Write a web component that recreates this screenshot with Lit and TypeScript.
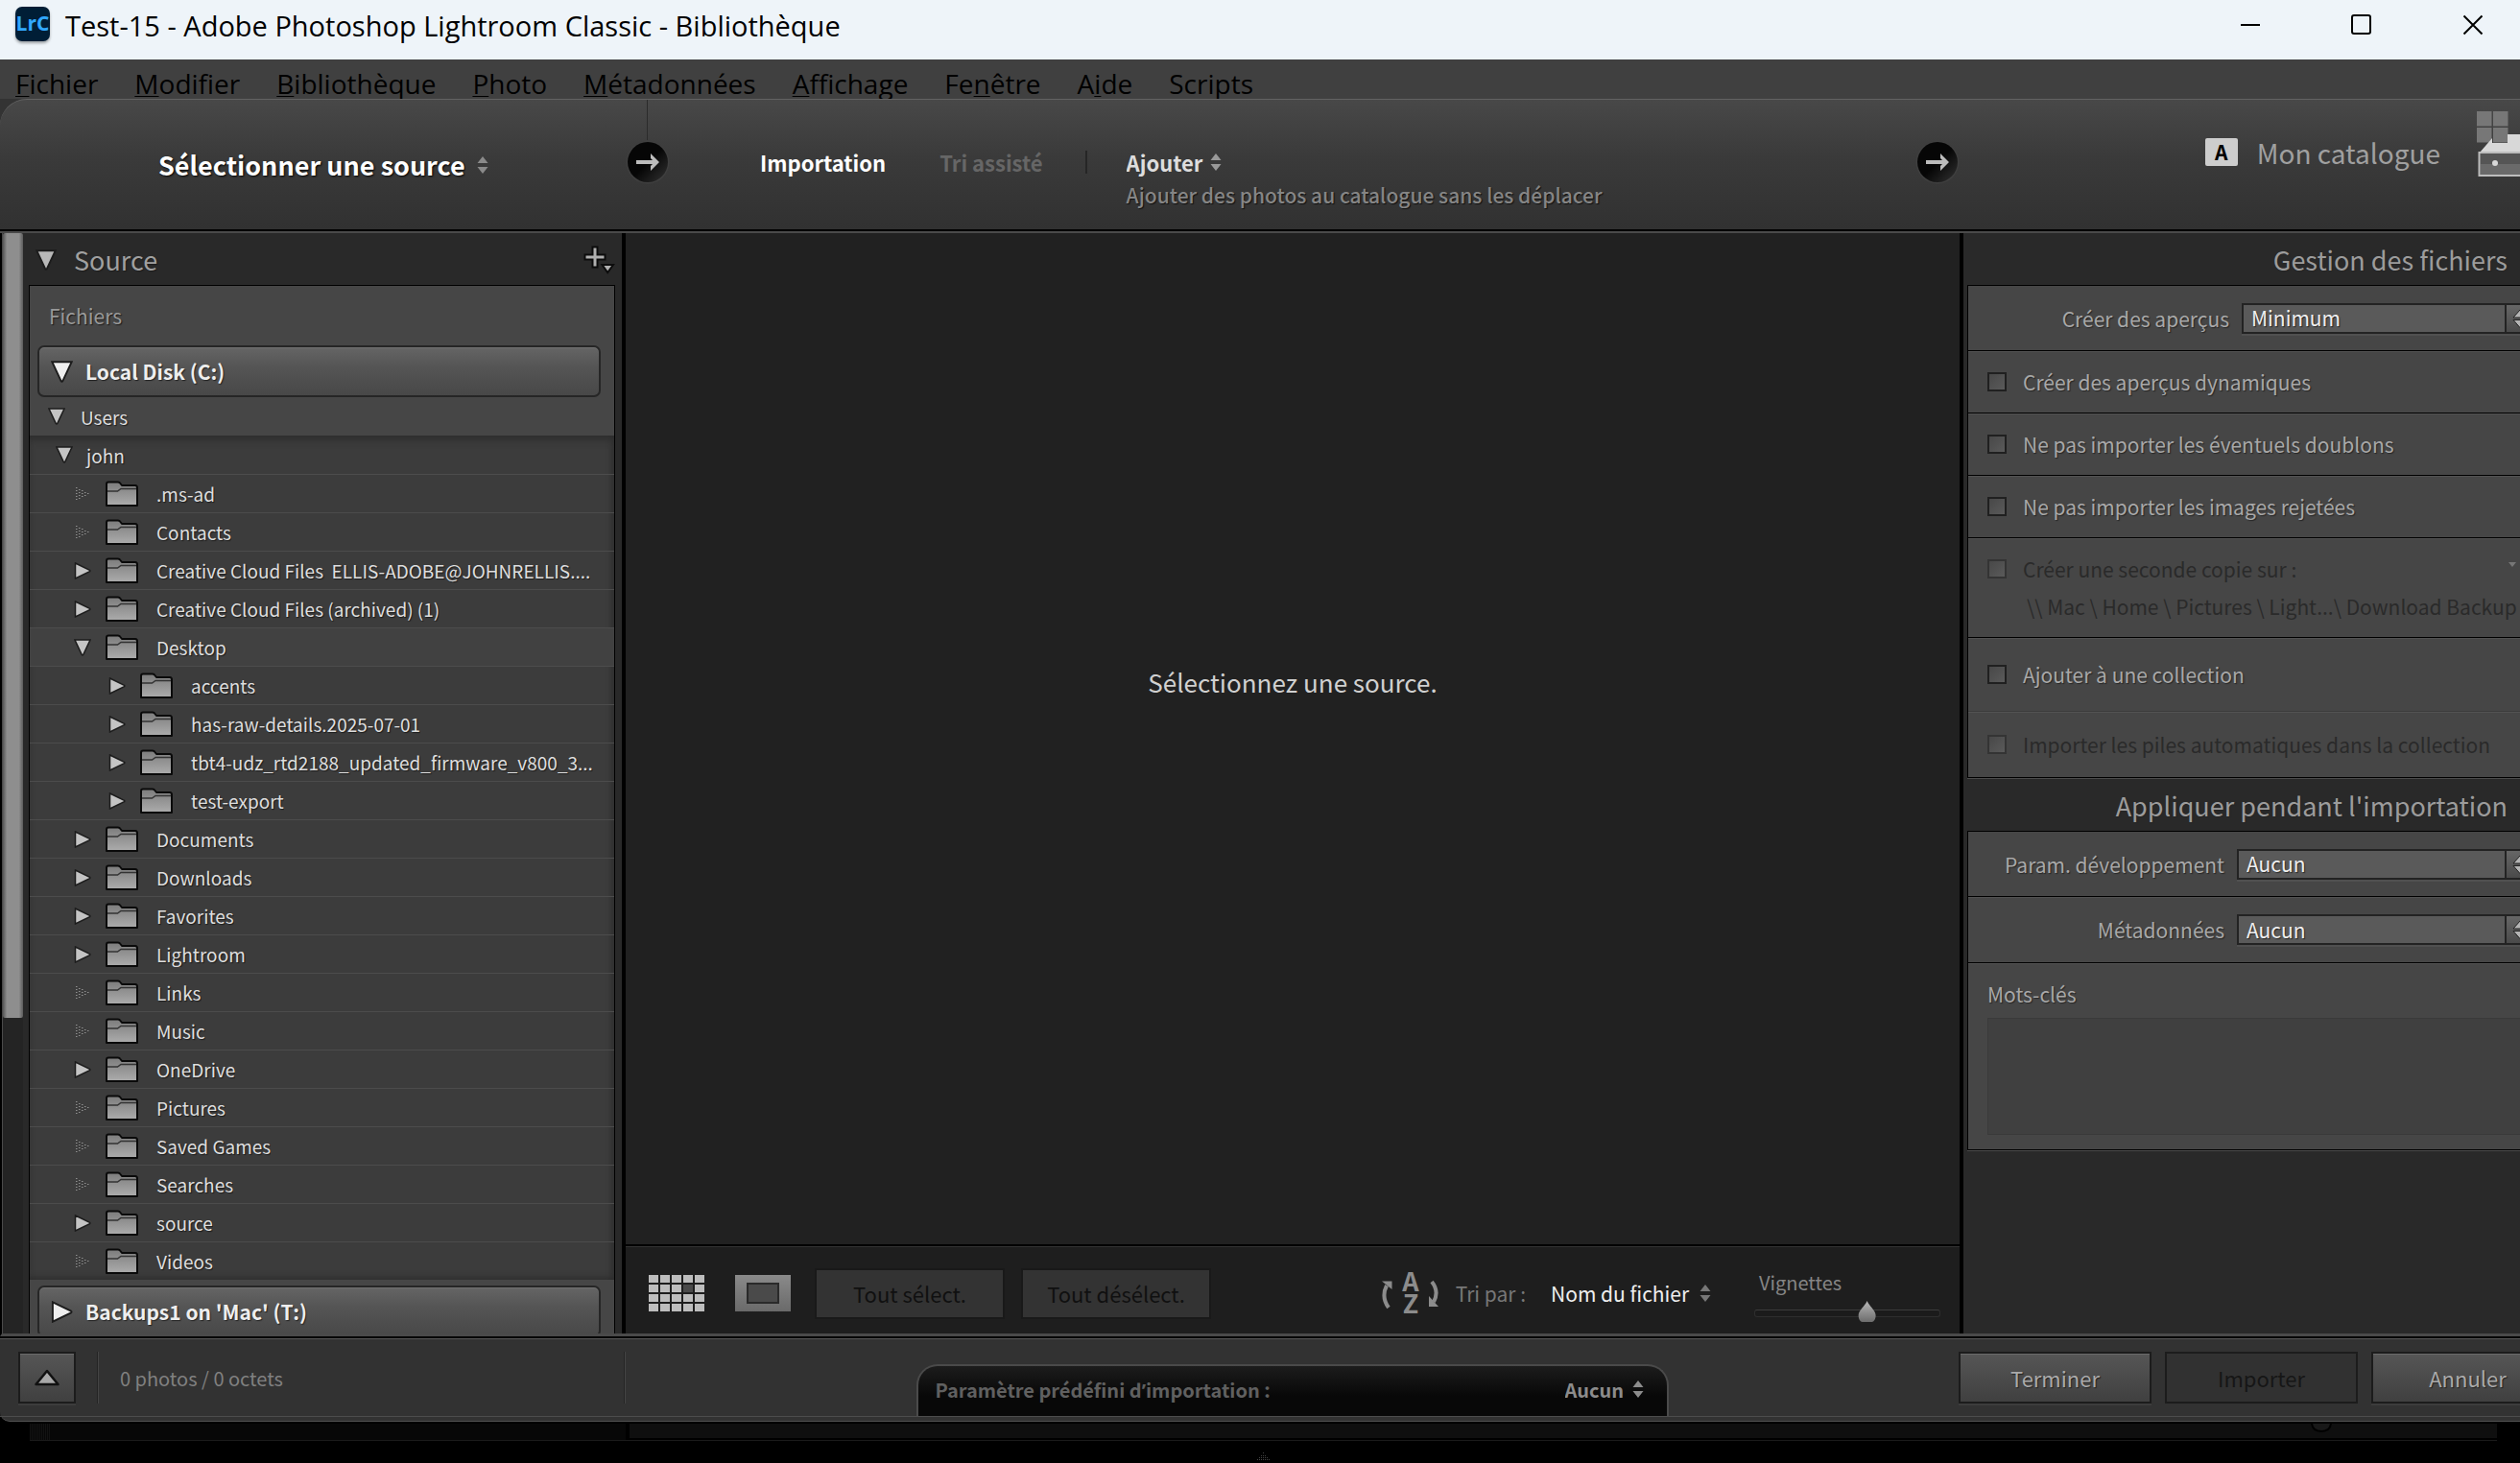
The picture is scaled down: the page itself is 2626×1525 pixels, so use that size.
import { LitElement, html, css, svg, nothing } from "lit";
import { customElement, property, state } from "lit/decorators.js";
import { classMap } from "lit/directives/class-map.js";

type Toggle = "open" | "closed" | "empty";

interface Folder {
  name: string;
  toggle: Toggle;
  children?: Folder[];
}

const FOLDERS: Folder[] = [
  { name: ".ms-ad", toggle: "empty" },
  { name: "Contacts", toggle: "empty" },
  { name: "Creative Cloud Files  ELLIS-ADOBE@JOHNRELLIS....", toggle: "closed" },
  { name: "Creative Cloud Files (archived) (1)", toggle: "closed" },
  {
    name: "Desktop",
    toggle: "open",
    children: [
      { name: "accents", toggle: "closed" },
      { name: "has-raw-details.2025-07-01", toggle: "closed" },
      { name: "tbt4-udz_rtd2188_updated_firmware_v800_3...", toggle: "closed" },
      { name: "test-export", toggle: "closed" },
    ],
  },
  { name: "Documents", toggle: "closed" },
  { name: "Downloads", toggle: "closed" },
  { name: "Favorites", toggle: "closed" },
  { name: "Lightroom", toggle: "closed" },
  { name: "Links", toggle: "empty" },
  { name: "Music", toggle: "empty" },
  { name: "OneDrive", toggle: "closed" },
  { name: "Pictures", toggle: "empty" },
  { name: "Saved Games", toggle: "empty" },
  { name: "Searches", toggle: "empty" },
  { name: "source", toggle: "closed" },
  { name: "Videos", toggle: "empty" },
];

/* Menu labels; the character after "&" is the keyboard mnemonic. */
const MENUS = [
  "&Fichier",
  "&Modifier",
  "&Bibliothèque",
  "&Photo",
  "&Métadonnées",
  "&Affichage",
  "Fe&nêtre",
  "A&ide",
  "Scripts",
];

const base = css`
  * {
    box-sizing: border-box;
  }
  button,
  select,
  textarea,
  input {
    font: inherit;
    color: inherit;
    margin: 0;
    padding: 0;
    border: 0;
    border-radius: 0;
    background: none;
  }
  button {
    cursor: pointer;
  }
  select {
    appearance: none;
    cursor: pointer;
  }
  svg {
    display: block;
    flex: none;
  }
`;

const updown = html`<svg width="12" height="18" viewBox="0 0 12 18" fill="currentColor" aria-hidden="true">
  <path d="M6 0 11.500 7H.5z M6 18 .5 11H11.500z" />
</svg>`;

const folderIcon = html`<svg width="36" height="28" viewBox="0 0 36 28" aria-hidden="true">
  <defs>
    <linearGradient id="f" x2="0" y2="1">
      <stop offset="0" stop-color="#7c7c7c" />
      <stop offset="1" stop-color="#acacac" />
    </linearGradient>
  </defs>
  <path
    d="M2 26V3.500Q2 1.500 4 1.500H14Q15.500 1.500 16 2.500L18 5H32Q34 5 34 7.500V26Z"
    fill="url(#f)"
    stroke="#0a0a0a"
    stroke-width="2"
    stroke-linejoin="round"
  />
  <path d="M3 11H13.500L17 8.500H33" fill="none" stroke="#333" stroke-width="1.500" />
</svg>`;

@customElement("disclosure-arrow")
class DisclosureArrow extends LitElement {
  @property() kind: Toggle = "closed";
  @property({ type: Number }) size = 18;

  static styles = css`
    :host {
      display: block;
      flex: none;
    }
    svg {
      display: block;
    }
  `;

  render() {
    const dots = [];
    if (this.kind === "empty") {
      for (let c = 0; c < 5; c++) {
        const n = 5 - c;
        const top = 2 + Math.round(c * 1.5);
        for (let r = 0; r < n; r++) {
          dots.push(svg`<rect x=${2 + c * 3} y=${top + r * 3} width="1.500" height="1" />`);
        }
      }
    }
    return html`<svg width=${this.size} height=${this.size} viewBox="0 0 18 18" aria-hidden="true">
      ${this.kind === "empty"
        ? svg`<g fill="#909090">${dots}</g>`
        : this.kind === "open"
          ? svg`<path d="M1 1H17L9.700 16.500Q9 17.500 8.300 16.500Z" fill="currentColor" stroke="#1c1c1c" stroke-width="1.500"/>`
          : svg`<path d="M1.500 1 16.500 8.300Q17.300 9 16.500 9.700L1.500 17Z" fill="currentColor" stroke="#1c1c1c" stroke-width="1.500"/>`}
    </svg>`;
  }
}

@customElement("title-bar")
class TitleBar extends LitElement {
  static styles = [
    base,
    css`
      .bar {
        height: 62px;
        background: #eef4f9;
        color: #000;
        display: flex;
        align-items: flex-start;
        padding-left: 16px;
        gap: 16px;
      }
      .logo {
        margin-top: 7px;
        width: 36px;
        height: 36px;
        border-radius: 7px;
        background: #001e36;
        color: #31a8ff;
        font: 700 21px/34px "Open Sans", sans-serif;
        text-align: center;
        display: flex;
        justify-content: center;
        box-shadow: 0 2px 3px rgba(0, 0, 0, 0.35);
      }
      .title {
        font-size: 29px;
        line-height: 54px;
        flex: 1;
        white-space: nowrap;
        font-weight: 400;
        margin: 0;
      }
      .win {
        width: 116px;
        height: 52px;
        display: grid;
        place-items: center;
      }
      .controls {
        display: flex;
        margin-right: -9px;
      }
    `,
  ];
  render() {
    const win = (label: string, shape: unknown) =>
      html`<button class="win" aria-label=${label}>
        <svg width="22" height="22" viewBox="0 0 22 22" fill="none" stroke="#000" stroke-width="2">${shape}</svg>
      </button>`;
    return html`<header class="bar">
      <span class="logo">LrC</span>
      <h1 class="title">Test-15 - Adobe Photoshop Lightroom Classic - Bibliothèque</h1>
      <div class="controls">
        ${win("Réduire", svg`<path d="M1 11H21"/>`)}
        ${win("Agrandir", svg`<rect x="1" y="1" width="19" height="19" rx="2"/>`)}
        ${win("Fermer", svg`<path d="M1.500 1.500 20.500 20.500M20.500 1.500 1.500 20.500"/>`)}
      </div>
    </header>`;
  }
}

@customElement("menu-bar")
class MenuBar extends LitElement {
  static styles = [
    base,
    css`
      .bar {
        height: 41px;
        background: #404040;
        color: #000;
        display: flex;
        gap: 38px;
        padding-left: 16px;
        overflow: hidden;
        font-size: 28px;
        line-height: 50px;
      }
      .menu {
        white-space: nowrap;
        height: 50px;
      }
      .key {
        text-decoration: underline;
        text-underline-offset: 2px;
        text-decoration-thickness: 1px;
        text-decoration-skip-ink: none;
      }
    `,
  ];
  render() {
    return html`<nav class="bar">
      ${MENUS.map((m) => {
        const i = m.indexOf("&");
        return html`<button class="menu">${i < 0 ? m : html`${m.slice(0, i)}<span class="key">${m[i + 1]}</span>${m.slice(i + 2)}`}</button>`;
      })}
    </nav>`;
  }
}

@customElement("import-header")
class ImportHeader extends LitElement {
  static styles = [
    base,
    css`
      .wrap {
        background: #333;
        border-bottom: 2px solid #4a4a4a;
      }
      .head {
        height: 138px;
        border-top: 1px solid #626262;
        border-bottom: 2px solid #000;
        border-top-left-radius: 28px;
        background: linear-gradient(#484848, #3a3a3a 45%, #313131);
        display: grid;
        grid-template-columns: 698px minmax(0, 1fr) 584px;
      }
      .cell {
        display: flex;
        align-items: center;
        min-width: 0;
        white-space: nowrap;
      }
      .source {
        padding-left: 165px;
        gap: 12px;
        color: #8a8a8a;
      }
      .source select {
        font-size: 27px;
        line-height: 40px;
        font-weight: 700;
        color: #fff;
        text-shadow: 1px 1px 2px #000;
      }
      .go {
        width: 46px;
        height: 46px;
        margin-left: auto;
      }
      .divided {
        height: 135px;
        margin-left: auto;
        padding-bottom: 6px;
        display: grid;
        place-items: center;
        background: linear-gradient(#2b2b2b, #2b2b2b) 22px 0 / 1px 42px no-repeat;
      }
      .modes {
        padding: 0 0 6px 94px;
        font-size: 22px;
        line-height: 34px;
        font-weight: 700;
        text-shadow: 1px 1px 1px #111;
      }
      .mode {
        color: #fff;
      }
      .mode.off {
        color: #666;
        margin-left: 56px;
      }
      .bar {
        width: 2px;
        height: 24px;
        background: #262626;
        margin: 0 41px 0 44px;
      }
      .action {
        padding-top: 34px;
      }
      .pick {
        display: flex;
        align-items: center;
        gap: 7px;
        color: #999;
      }
      .pick select {
        font-weight: 700;
        color: #ddd;
        line-height: 34px;
      }
      .hint {
        margin: 0;
        font-weight: 500;
        font-size: 21px;
        color: #858585;
      }
      .target {
        justify-content: flex-end;
        padding-bottom: 26px;
        color: #a0a0a0;
        font-size: 28px;
        line-height: 40px;
        overflow: hidden;
      }
      .badge {
        width: 34px;
        height: 29px;
        border-radius: 2px;
        background: #cdcdcd;
        color: #000;
        font-size: 21px;
        line-height: 28px;
        font-weight: 700;
        text-align: center;
        margin-right: 20px;
      }
      .drive {
        margin: 0 0 18px 37px;
      }
    `,
  ];
  private go(label: string) {
    return html`<button class="go" aria-label=${label}>
      <svg width="46" height="46" viewBox="0 0 46 46">
        <defs>
          <linearGradient id="g" x2="1" y2="1">
            <stop offset="0.500" stop-color="#060606" />
            <stop offset="1" stop-color="#333" />
          </linearGradient>
        </defs>
        <circle cx="23" cy="23" r="22.500" fill="#3f3f3f" />
        <circle cx="23" cy="23" r="21" fill="url(#g)" />
        <path d="M11 23H33" stroke="#bcbcbc" stroke-width="4" />
        <path d="M26 14 35 23 26 32V27L30 23 26 19Z" fill="#bcbcbc" />
      </svg>
    </button>`;
  }
  render() {
    return html`<div class="wrap"><section class="head">
      <div class="cell source">
        <select aria-label="Source"><option>Sélectionner une source</option></select>
        ${updown}
        <div class="divided">${this.go("Source suivante")}</div>
      </div>
      <div class="cell modes">
        <button class="mode">Importation</button>
        <button class="mode off">Tri assisté</button>
        <span class="bar"></span>
        <div class="action">
          <label class="pick"><select aria-label="Action"><option>Ajouter</option></select>${updown}</label>
          <p class="hint">Ajouter des photos au catalogue sans les déplacer</p>
        </div>
        ${this.go("Destination")}
      </div>
      <div class="cell target">
        <span class="badge">A</span>
        <span>Mon catalogue</span>
        <svg class="drive" width="46" height="70" viewBox="0 0 46 70">
          <g fill="#777">
            <rect x="1" y="1" width="15.500" height="15.500" />
            <rect x="18" y="1" width="15.500" height="15.500" />
            <rect x="1" y="18" width="15.500" height="15.500" />
            <rect x="18" y="18" width="15.500" height="15.500" />
          </g>
          <path d="M4 44 17 29V34H33V25H46V44Z" fill="#d8d8d8" />
          <rect x="3.500" y="44" width="60" height="24" fill="#555" stroke="#bdbdbd" stroke-width="2" />
          <rect x="5" y="56" width="50" height="11" fill="#6a6a6a" />
          <circle cx="20" cy="55" r="3" fill="#d8d8d8" />
        </svg>
      </div>
    </section></div>`;
  }
}

@customElement("source-panel")
class SourcePanel extends LitElement {
  @state() private folders = FOLDERS;

  static styles = [
    base,
    css`
      :host {
        display: flex;
        min-height: 0;
        background: #292929;
      }
      .track {
        width: 22px;
        background: #242424;
        border-left: 1px solid #4a4a4a;
        flex: none;
      }
      .thumb {
        height: 818px;
        background: linear-gradient(90deg, #555, #8e8e8e 20%, #8e8e8e 80%, #5c5c5c);
        border-radius: 2px;
      }
      .panel {
        flex: 1;
        min-width: 0;
        padding: 0 7px 0 6px;
        overflow: hidden;
        font-size: 19px;
        color: #dcdcdc;
        text-shadow: 1px 1px 1px #1c1c1c;
      }
      .head {
        height: 54px;
        display: flex;
        align-items: center;
        gap: 18px;
        padding: 2px 0 0 7px;
        color: #b8b8b8;
      }
      .head h2 {
        flex: 1;
        margin: 0;
        font-size: 27px;
        line-height: 40px;
        font-weight: 400;
        color: #a0a0a0;
      }
      .body {
        background: #464646;
        border: 1px solid #000;
      }
      .caption {
        margin: 0;
        font-size: 21px;
        line-height: 62px;
        padding-left: 20px;
        color: #999;
        font-weight: 400;
      }
      .disk {
        display: flex;
        align-items: center;
        width: calc(100% - 22px);
        margin-left: 8px;
        height: 54px;
        padding-left: 12px;
        gap: 13px;
        border: 2px solid #262626;
        border-radius: 7px;
        background: linear-gradient(#656565, #555 40%, #484848);
        box-shadow: inset 0 1px 0 #707070;
        font-size: 21px;
        font-weight: 700;
        color: #eee;
        text-shadow: 1px 1px 1px #222;
      }
      .disk.next {
        margin-top: 6px;
      }
      .row {
        display: flex;
        align-items: center;
        height: 40px;
        color: #c4c4c4;
      }
      .row span {
        color: #dedede;
      }
      .users {
        padding-left: 19px;
        gap: 16px;
      }
      .users button,
      .john button,
      .folder button {
        flex: none;
      }
      .inset {
        background: #3c3c3c;
        box-shadow: inset 0 8px 8px -4px #2d2d2d, inset 0 -6px 6px -4px #2d2d2d, inset -6px 0 6px -4px #303030;
      }
      .john {
        padding-left: 27px;
        gap: 14px;
      }
      .list {
        list-style: none;
        margin: 0;
        padding: 0;
      }
      .folder {
        border-top: 1px solid #4c4c4c;
        padding: 0 12px 0 46px;
        gap: 14px;
      }
      .folder.open {
        background: #414141;
      }
      .folder.sub {
        padding-left: 82px;
      }
      .name {
        padding-left: 4px;
        overflow: hidden;
        text-overflow: ellipsis;
        white-space: pre;
      }
    `,
  ];

  private flip(f: Folder) {
    if (f.toggle === "empty") return;
    f.toggle = f.toggle === "open" ? "closed" : "open";
    this.folders = [...this.folders];
  }

  private row(f: Folder, sub = false): unknown {
    return html`<li>
      <div class=${classMap({ row: true, folder: true, sub, open: f.toggle === "open" })}>
        <button aria-label=${f.name} ?disabled=${f.toggle === "empty"} @click=${() => this.flip(f)}>
          <disclosure-arrow kind=${f.toggle}></disclosure-arrow>
        </button>
        ${folderIcon}
        <span class="name">${f.name}</span>
      </div>
      ${f.children && f.toggle === "open"
        ? html`<ul class="list">${f.children.map((c) => this.row(c, true))}</ul>`
        : nothing}
    </li>`;
  }

  render() {
    return html`
      <div class="track"><div class="thumb"></div></div>
      <div class="panel">
        <div class="head">
          <disclosure-arrow kind="open" size="22"></disclosure-arrow>
          <h2>Source</h2>
          <button aria-label="Ajouter une source">
            <svg width="34" height="30" viewBox="0 0 34 30" fill="#b0b0b0" stroke="#0c0c0c" stroke-width="2">
              <path d="M10.500 1.500H15.500V9.500H23.500V14.500H15.500V22.500H10.500V14.500H2.500V9.500H10.500Z" />
              <path d="M20.500 20H32L26.200 28Z" />
            </svg>
          </button>
        </div>
        <div class="body">
          <h3 class="caption">Fichiers</h3>
          <button class="disk">
            <disclosure-arrow kind="open" size="23"></disclosure-arrow>Local Disk (C:)
          </button>
          <div class="row users">
            <button aria-label="Users"><disclosure-arrow kind="open"></disclosure-arrow></button><span>Users</span>
          </div>
          <div class="inset">
            <div class="row john">
              <button aria-label="john"><disclosure-arrow kind="open"></disclosure-arrow></button><span>john</span>
            </div>
            <ul class="list">${this.folders.map((f) => this.row(f))}</ul>
          </div>
          <button class="disk next">
            <disclosure-arrow kind="closed" size="23"></disclosure-arrow>Backups1 on 'Mac' (T:)
          </button>
        </div>
      </div>
    `;
  }
}

@customElement("preview-area")
class PreviewArea extends LitElement {
  static styles = [
    base,
    css`
      :host {
        display: flex;
        flex-direction: column;
        min-width: 0;
        min-height: 0;
        background: #212121;
        border: solid #000;
        border-width: 0 4px;
      }
      .stage {
        flex: 1;
        min-height: 0;
        padding-top: 448px;
        text-align: center;
        font-size: 26px;
        line-height: 40px;
        color: #d0d0d0;
      }
      .tools {
        height: 93px;
        border-top: 2px solid #000;
        background: #1e1e1e;
        box-shadow: inset 0 1px 0 #333;
        display: flex;
        align-items: center;
        padding: 7px 20px 0 24px;
        font-size: 22px;
        line-height: 34px;
        white-space: nowrap;
      }
      .loupe {
        margin-left: 32px;
      }
      .push {
        width: 198px;
        height: 53px;
        background: #333;
        border: 2px solid #191919;
        color: #101010;
        margin-left: 17px;
      }
      .push.first {
        margin-left: 25px;
      }
      .sort {
        margin-left: auto;
        display: flex;
        align-items: center;
        color: #777;
        font-size: 21px;
      }
      .az {
        margin-right: 15px;
        color: #8c8c8c;
      }
      .az text {
        font-weight: 700;
        font-size: 27px;
        fill: currentColor;
        text-anchor: middle;
      }
      .sort select {
        color: #eee;
        margin: 0 10px 0 26px;
        line-height: 34px;
      }
      .size {
        margin-left: 45px;
        padding-top: 8px;
        width: 194px;
        display: flex;
        flex-direction: column;
        font-size: 20px;
        line-height: 34px;
        color: #858585;
      }
      .size span {
        padding-left: 5px;
      }
      .range {
        appearance: none;
        width: 100%;
        height: 30px;
      }
      .range::-webkit-slider-runnable-track {
        height: 8px;
        border: 1px solid #2e2e2e;
        border-top-color: #3d3d3d;
        border-radius: 3px;
        background: #1b1b1b;
      }
      .range::-webkit-slider-thumb {
        appearance: none;
        width: 20px;
        height: 22px;
        margin-top: -10px;
        background: linear-gradient(#b8b8b8, #6c6c6c);
        clip-path: path("M10 0C12 5 19 10 19 15C19 19 17 22 15 22H5C3 22 1 19 1 15C1 10 8 5 10 0Z");
      }
    `,
  ];
  render() {
    const cells = [];
    for (let r = 0; r < 4; r++)
      for (let c = 0; c < 5; c++)
        cells.push(svg`<rect x=${c * 12} y=${r * 10} width="10" height="8" fill=${r === 1 && c === 3 ? "#4a4a4a" : "#bdbdbd"} />`);
    return html`
      <div class="stage">Sélectionnez une source.</div>
      <div class="tools">
        <button aria-label="Grille"><svg width="58" height="38" viewBox="0 0 58 38">${cells}</svg></button>
        <button class="loupe" aria-label="Loupe">
          <svg width="58" height="38" viewBox="0 0 58 38">
            <defs><linearGradient id="l" x2="0" y2="1"><stop stop-color="#8a8a8a" /><stop offset="1" stop-color="#6a6a6a" /></linearGradient></defs>
            <rect width="58" height="38" fill="url(#l)" />
            <rect x="13" y="9" width="32" height="20" fill="#4a4a4a" stroke="#2a2a2a" stroke-width="2" />
          </svg>
        </button>
        <button class="push first">Tout sélect.</button>
        <button class="push">Tout désélect.</button>
        <div class="sort">
          <svg class="az" width="64" height="48" viewBox="0 0 64 48" fill="none" stroke="currentColor" stroke-width="4">
            <path d="M9 39Q1 28 7 16" />
            <path d="M2 11.500H12.500V20Z" fill="currentColor" stroke="none" />
            <path d="M54 12Q62 22 56 33" />
            <path d="M51 27V38H61Z" fill="currentColor" stroke="none" />
            <text x="32" y="22" stroke="none">A</text>
            <text x="32" y="45" stroke="none">Z</text>
          </svg>
          <label for="order">Tri par :</label>
          <select id="order"><option>Nom du fichier</option></select>
          ${updown}
        </div>
        <label class="size"><span>Vignettes</span><input class="range" type="range" min="0" max="100" value="62" /></label>
      </div>
    `;
  }
}

@customElement("options-panel")
class OptionsPanel extends LitElement {
  static styles = [
    base,
    css`
      :host {
        display: block;
        min-width: 0;
        overflow: hidden;
        background: #292929;
        padding-left: 4px;
        font-size: 21px;
        line-height: 32px;
        color: #a8a8a8;
        text-shadow: 1px 1px 1px #262626;
        white-space: nowrap;
      }
      .head {
        margin: 0;
        height: 54px;
        line-height: 56px;
        font-size: 27px;
        font-weight: 400;
        text-align: right;
        padding-right: 13px;
        color: #9c9c9c;
      }
      .group {
        background: #464646;
        border: solid #000;
        border-width: 1px 0 1px 1px;
        box-shadow: 0 1px 0 #4c4c4c;
        margin-bottom: 1px;
      }
      .line {
        height: 65px;
        display: flex;
        align-items: center;
        padding-left: 20px;
        gap: 17px;
      }
      .line + .line,
      .line + .copy,
      .copy + .line,
      .line + .words {
        border-top: 1px solid #000;
        box-shadow: inset 0 1px 0 #525252;
      }
      .field {
        height: 67px;
        gap: 13px;
        justify-content: flex-end;
      }
      .field + .field {
        height: 69px;
      }
      .box {
        display: flex;
        width: 290px;
        height: 32px;
        border: 2px solid #232323;
        border-right: 0;
        box-shadow: 0 2px 0 #505050;
        background: #5a5a5a;
      }
      .box.wide {
        width: 295px;
      }
      .box select {
        flex: 1;
        min-width: 0;
        padding-left: 8px;
        line-height: 27px;
        color: #eee;
        text-shadow: inherit;
      }
      .step {
        width: 16px;
        border-left: 2px solid #232323;
        background: linear-gradient(#666, #4a4a4a);
        overflow: hidden;
      }
      .tick {
        appearance: none;
        width: 20px;
        height: 20px;
        border: 2px solid #202020;
        background: linear-gradient(135deg, #484848, #5a5a5a);
        flex: none;
      }
      .off {
        color: #2a2a2a;
        text-shadow: none;
      }
      .off .tick {
        border-color: #343434;
      }
      .copy {
        height: 104px;
        padding: 8px 0 0 20px;
      }
      .copy .first {
        display: flex;
        align-items: center;
        gap: 17px;
        height: 47px;
      }
      .copy svg {
        margin: 0 4px 8px auto;
      }
      .path {
        padding-left: 41px;
      }
      .tall {
        height: 77px;
      }
      .line + .soft {
        height: 69px;
        border-top: 1px solid #3c3c3c;
      }
      .words {
        padding: 16px 0 15px 20px;
        display: flex;
        flex-direction: column;
        gap: 9px;
      }
      .words textarea {
        display: block;
        height: 122px;
        background: #404040;
        border: 1px solid #3a3a3a;
        border-right: 0;
        resize: none;
      }
    `,
  ];
  private check(text: string, extra = "") {
    return html`<label class="line check ${extra}"><input class="tick" type="checkbox" ?disabled=${extra.includes("off")} />${text}</label>`;
  }
  private field(label: string, value: string, wide = false) {
    return html`<label class="line field">${label}
      <span class=${classMap({ box: true, wide })}>
        <select><option>${value}</option></select>
        <span class="step"><svg width="24" height="28" viewBox="0 0 24 28" fill="#b4b4b4" stroke="#222"><path d="M14 5 21 13H7Z M7 15.500H21L14 23.500Z" /></svg></span>
      </span>
    </label>`;
  }
  render() {
    return html`
      <h2 class="head">Gestion des fichiers</h2>
      <section class="group">
        ${this.field("Créer des aperçus", "Minimum")}
        ${this.check("Créer des aperçus dynamiques")}
        ${this.check("Ne pas importer les éventuels doublons")}
        ${this.check("Ne pas importer les images rejetées")}
        <div class="copy off">
          <label class="first"><input class="tick" type="checkbox" disabled />Créer une seconde copie sur :
            <svg width="8" height="5" viewBox="0 0 8 5"><path d="M0 0H8L4 5Z" fill="#777" /></svg>
          </label>
          <div class="path">\\\\ Mac \\ Home \\ Pictures \\ Light...\\ Download Backup</div>
        </div>
        ${this.check("Ajouter à une collection", "tall")}
        ${this.check("Importer les piles automatiques dans la collection", "soft off")}
      </section>
      <h2 class="head">Appliquer pendant l'importation</h2>
      <section class="group">
        ${this.field("Param. développement", "Aucun", true)}
        ${this.field("Métadonnées", "Aucun", true)}
        <div class="words">
          <label for="words">Mots-clés</label>
          <textarea id="words"></textarea>
        </div>
      </section>
    `;
  }
}

@customElement("import-footer")
class ImportFooter extends LitElement {
  static styles = [
    base,
    css`
      :host {
        display: block;
        background: #000;
        padding: 2px 0 23px;
      }
      .shell {
        background: #323232;
        border-top: 1px solid #585858;
        border-bottom: 1px solid #505050;
        border-bottom-left-radius: 10px;
        padding-bottom: 4px;
      }
      .bar {
        height: 81px;
        border-bottom: 1px solid #4c4c4c;
        display: grid;
        grid-template-columns: 652px minmax(0, 1fr) 585px;
        white-space: nowrap;
      }
      .info {
        display: flex;
        align-items: center;
        padding-left: 19px;
        font-size: 20px;
        color: #808080;
      }
      .sep {
        width: 2px;
        height: 54px;
        background: #242424;
        border-right: 1px solid #444;
        margin: 0 22px 0 22px;
      }
      .sep.last {
        margin: 0 0 0 auto;
      }
      .btn {
        height: 54px;
        width: 201px;
        flex: none;
        border: 2px solid #1c1c1c;
        background: linear-gradient(#565656, #404040);
        box-shadow: inset 0 1px 0 #6a6a6a, 0 2px 0 #3c3c3c;
        color: #aaa;
        text-shadow: 1px 1px 1px #222;
      }
      .btn.square {
        width: 60px;
        display: grid;
        place-items: center;
      }
      .btn[disabled] {
        background: #313131;
        box-shadow: none;
        color: #161616;
        text-shadow: none;
      }
      .preset {
        justify-self: center;
        align-self: end;
        width: 784px;
        max-width: 100%;
        height: 54px;
        display: flex;
        align-items: center;
        gap: 8px;
        padding: 0 24px 4px 18px;
        border: 2px solid #4a4a4a;
        border-bottom: 0;
        border-radius: 22px 22px 0 0;
        background: linear-gradient(#1c1c1c, #080808 60%);
        font-size: 20px;
        font-weight: 700;
        color: #8c8c8c;
      }
      .preset label {
        color: #606060;
        flex: 1;
      }
      .quote {
        font-family: "Noto Sans", sans-serif;
      }
      .preset select {
        color: #8c8c8c;
      }
      .actions {
        display: flex;
        align-items: center;
        gap: 14px;
        overflow: hidden;
        font-size: 22px;
      }
      .under {
        margin: 2px 24px 0 31px;
        height: 18px;
        display: flex;
        background: #0f0f0f;
        border-bottom: 1px solid #1a1a1a;
        box-shadow: inset 0 -2px 0 #000;
      }
      .dark {
        width: 625px;
        background: #070707;
        border-right: 4px solid #000;
        background-image: repeating-linear-gradient(90deg, #121212 0 1px, transparent 1px 2px);
        background-size: 22px 100%;
        background-repeat: no-repeat;
      }
      .knob {
        margin: 0 172px 0 auto;
      }
      .grip {
        display: block;
        margin: 12px auto -20px calc(50% - 3px);
      }
    `,
  ];
  render() {
    return html`
      <footer class="shell">
        <div class="bar">
          <div class="info">
            <button class="btn square" aria-label="Réduire">
              <svg width="28" height="18" viewBox="0 0 28 18"><path d="M14 2 25.500 16H2.500Z" fill="#a8a8a8" stroke="#111" stroke-width="2.500" stroke-linejoin="round" /></svg>
            </button>
            <span class="sep"></span>0 photos / 0 octets<span class="sep last"></span>
          </div>
          <div class="preset">
            <label for="preset">Paramètre prédéfini d<span class="quote">’</span>importation :</label>
            <select id="preset"><option>Aucun</option></select>
            ${updown}
          </div>
          <div class="actions">
            <button class="btn">Terminer</button>
            <button class="btn" disabled>Importer</button>
            <button class="btn">Annuler</button>
          </div>
        </div>
      </footer>
      <div class="under">
        <span class="dark"></span>
        <svg class="knob" width="22" height="10" viewBox="0 0 22 10"><path d="M1 0Q2 8 11 8T21 0" fill="#181818" stroke="#000" stroke-width="2" /></svg>
      </div>
      <svg class="grip" width="14" height="8" viewBox="0 0 14 8" stroke="#444" stroke-dasharray="1 1"><path d="M6 .5H8M4 3.500H10M2 5.500H12M0 7.500H14" /></svg>
    `;
  }
}

@customElement("app-root")
class AppRoot extends LitElement {
  static styles = css`
    :host {
      display: flex;
      flex-direction: column;
      height: 100vh;
      overflow: hidden;
      background: #000;
      font-family: "Noto Sans CJK SC", "Noto Sans", sans-serif;
    }
    .chrome {
      font-family: "Open Sans", "Noto Sans", sans-serif;
    }
    .main {
      flex: 1;
      min-height: 0;
      display: grid;
      grid-template-columns: 646px minmax(0, 1fr) 580px;
      grid-template-rows: minmax(0, 1fr);
      border-left: 2px solid #000;
      border-bottom: 3px solid #4a4a4a;
    }
  `;
  render() {
    return html`
      <title-bar class="chrome"></title-bar>
      <menu-bar class="chrome"></menu-bar>
      <import-header></import-header>
      <main class="main">
        <source-panel></source-panel>
        <preview-area></preview-area>
        <options-panel></options-panel>
      </main>
      <import-footer></import-footer>
    `;
  }
}
